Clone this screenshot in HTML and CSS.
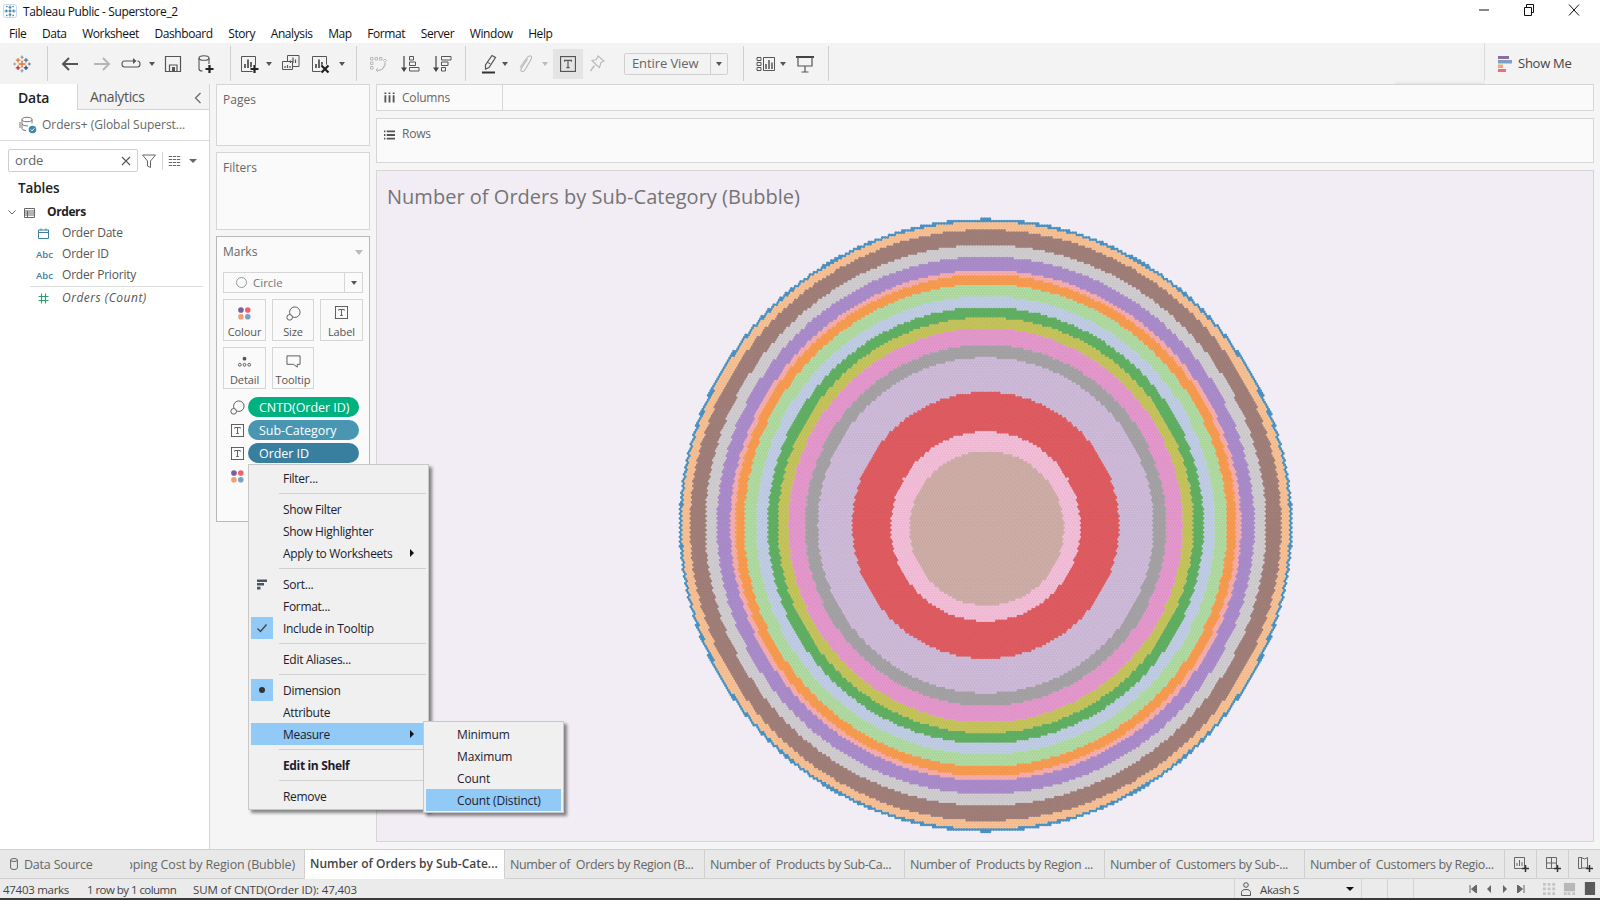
FILE: index.html
```html
<!DOCTYPE html>
<html lang="en">
<head>
<meta charset="utf-8">
<title>Tableau Public - Superstore_2</title>
<link rel="stylesheet" href="styles.css">
</head>
<body>
<svg class="defs" width="0" height="0" aria-hidden="true">
  <symbol id="i-t" viewBox="0 0 14 14"><rect x=".5" y=".5" width="13" height="13" fill="none" stroke="#555"/><path d="M4 5V3.800h6V5M7 3.800v6.400M5.600 10.200h2.800" fill="none" stroke="#555"/></symbol>
  <symbol id="i-dots" viewBox="0 0 16 16"><circle cx="4.200" cy="4.200" r="3" fill="#7b5f96"/><circle cx="11.500" cy="4.200" r="3" fill="#f0616f"/><circle cx="4.200" cy="11.500" r="3" fill="#f0a070"/><circle cx="11.500" cy="11.500" r="3" fill="#7f9fc8"/></symbol>
  <symbol id="i-size" viewBox="0 0 16 16"><circle cx="9.400" cy="6.600" r="5.600" fill="#fafafa" stroke="#555"/><circle cx="3.900" cy="12.100" r="3" fill="#fafafa" stroke="#555"/></symbol>
</svg>
<div class="app">
  <header class="titlebar">
    <svg class="app-icon" viewBox="0 0 14 14"><rect x=".5" y=".5" width="13" height="13" rx="2" fill="#fff" stroke="#c8d8e4"/><g stroke="#2a7cae" stroke-width="1"><path d="M7 1.500v3.500M5.500 3.200h3M7 9v3.500M5.500 10.800h3M1.500 7h3.500M3.200 5.500v3M9 7h3.500M10.800 5.500v3"/><path d="M7 5.500v3M5.500 7h3" stroke="#1b5e8c"/><path d="M3 2.500h1.500M3.800 1.800v1.500M9.500 2.500H11M10.200 1.800v1.500M3 11.500h1.500M3.800 10.800v1.500M9.500 11.500H11M10.200 10.800v1.500" stroke-width=".8"/></g></svg>
    <span class="app-title">Tableau Public - Superstore_2</span>
    <div class="winbtns">
      <svg viewBox="0 0 12 12"><path d="M1 6h10" stroke="#111"/></svg>
      <svg viewBox="0 0 12 12"><path d="M1.500 3.500h7v8h-7zM3.500 3.500V.5h7v8h-2" fill="none" stroke="#111"/></svg>
      <svg viewBox="0 0 12 12"><path d="M1 .5l10 11M11 .5l-10 11" stroke="#111"/></svg>
    </div>
  </header>
  <nav class="menubar">
    <span>File</span><span>Data</span><span>Worksheet</span><span>Dashboard</span><span>Story</span><span>Analysis</span><span>Map</span><span>Format</span><span>Server</span><span>Window</span><span>Help</span>
  </nav>
  <div class="toolbar">
    <div class="tool w44"><svg class="logo" viewBox="0 0 18 18"><g fill="none"><path d="M9 .5v3.500M7.500 2.200h3" stroke="#6f97a8" stroke-width="1"/><path d="M5 3v4.500M2.800 5.200h4.400" stroke="#e8762c" stroke-width="1.200"/><path d="M13 3v4.500M10.800 5.200h4.400" stroke="#5b6f8a" stroke-width="1.200"/><path d="M9 5.500v7M5.500 9h7" stroke="#e8762c" stroke-width="1.500"/><path d="M1.700 7.500v3M.2 9h3" stroke="#8aa0ac" stroke-width="1"/><path d="M16.300 7.500v3M14.800 9h3" stroke="#5b7f9a" stroke-width="1"/><path d="M5 10.500V15M2.800 12.800h4.400" stroke="#c72035" stroke-width="1.200"/><path d="M13 10.500V15M10.800 12.800h4.400" stroke="#1f447e" stroke-width="1.200"/><path d="M9 14v3.500M7.500 15.800h3" stroke="#6f97a8" stroke-width="1"/></g></svg></div>
    <i class="sep sep6"></i>
    <div class="tool w40"><svg class="ic" viewBox="0 0 20 20"><path d="M18 10H3M9 4l-6 6 6 6" fill="none" stroke="#555" stroke-width="2"/></svg></div>
    <div class="tool w24"><svg class="ic" viewBox="0 0 20 20"><path d="M2 10h15M11 4l6 6-6 6" fill="none" stroke="#b5b5b5" stroke-width="2"/></svg></div>
    <div class="tool w34"><svg class="ic ic-wide" viewBox="0 0 20 12"><path d="M12.500 3H3.500Q1 3 1 6t2.500 3h13q2.500 0 2.500-3t-2.500-3" fill="none" stroke="#555" stroke-width="1.100"/><path d="M12 0l3.500 3L12 6z" fill="#555"/></svg></div>
    <div class="tool w8"><i class="dd"></i></div>
    <div class="tool w34"><svg class="ic" viewBox="0 0 20 20"><path d="M2.500 2.500h15v15h-15z" fill="none" stroke="#555" stroke-width="1.200"/><path d="M6.500 17v-6h7.500v6" fill="none" stroke="#555" stroke-width="1.200"/><path d="M9 13h3v4H9z" fill="#555"/></svg></div>
    <div class="tool w30"><svg class="ic" viewBox="0 0 20 20"><ellipse cx="9" cy="4" rx="5" ry="2.300" fill="none" stroke="#555" stroke-width="1.100"/><path d="M4 4v11q0 2 3.500 2M14 4v6" fill="none" stroke="#555" stroke-width="1.100"/><path d="M14.500 11v8M10.500 15h8" stroke="#222" stroke-width="2.200"/></svg></div>
    <i class="sep"></i>
    <div class="tool w18"><svg class="ic" viewBox="0 0 20 20"><path d="M2.500 2.500h14v15h-14z" fill="none" stroke="#555"/><path d="M6 14v-4M9 14V5.500M12 14V8" stroke="#555" stroke-width="1.800"/><path d="M15.500 11v8M11.500 15h8" fill="none" stroke="#f3f3f3" stroke-width="4"/><path d="M15.500 11v8M11.500 15h8" stroke="#222" stroke-width="2.200"/></svg></div>
    <div class="tool w22"><i class="dd"></i></div>
    <div class="tool w22"><svg class="ic" viewBox="0 0 20 20"><path d="M6.500 1.500h11.500v11H6.500z" fill="#f3f3f3" stroke="#555"/><path d="M1.500 7.500h10v8h-10z" fill="#f3f3f3" stroke="#555"/><path d="M9.500 9V6.500M12 9V3.500M14.500 9V5.500M4 14v-2M6.500 14v-3M9 14v-2" stroke="#555" stroke-width="1.200"/></svg></div>
    <div class="tool w36"><svg class="ic" viewBox="0 0 20 20"><path d="M2.500 2.500h14v15h-14z" fill="none" stroke="#555"/><path d="M6 14v-4M9 14V5.500M12 14V8" stroke="#555" stroke-width="1.800"/><path d="M11.500 11.500l7 7M18.500 11.500l-7 7" stroke="#f3f3f3" stroke-width="4"/><path d="M11.500 11.500l7 7M18.500 11.500l-7 7" stroke="#222" stroke-width="2.200"/></svg></div>
    <div class="tool w8"><i class="dd"></i></div>
    <i class="sep"></i>
    <div class="tool w24"><svg class="ic" viewBox="0 0 20 20"><path d="M2.500 3.500h2.500v2.500H2.500zM7 3.500h2.500v2.500H7zM11.500 3.500H14v2.500h-2.500zM2.500 8h2.500v2.500H2.500zM2.500 12.500h2.500V15H2.500z" fill="none" stroke="#bbb"/><path d="M17 7q1 5-3.500 8.500M8 16q3 1 5.500-.5" fill="none" stroke="#bbb" stroke-width="1.200"/><path d="M15 7l2-2 2 2M10 14l-2 2 2 2" fill="none" stroke="#bbb"/></svg></div>
    <div class="tool w40"><svg class="ic" viewBox="0 0 20 20"><path d="M4 2v13" stroke="#444" stroke-width="1.200"/><path d="M1 13.500h6L4 18z" fill="#444"/><path d="M9.500 2.500h4v3.500h-4zM9.500 8h6v3.500h-6zM9.500 13.500h9.500V17H9.500z" fill="none" stroke="#555"/></svg></div>
    <div class="tool w24"><svg class="ic" viewBox="0 0 20 20"><path d="M4 2v13" stroke="#444" stroke-width="1.200"/><path d="M1 13.500h6L4 18z" fill="#444"/><path d="M9.500 2.500h9.500V6H9.500zM9.500 8h6.500v3.500H9.500zM9.500 13.500h4V17h-4z" fill="none" stroke="#555"/></svg></div>
    <i class="sep sep22"></i>
    <div class="tool w26"><svg class="ic" viewBox="0 0 20 20"><path d="M13 1.500l3.500 2-6.500 10-3.500 1.500 0-4z" fill="none" stroke="#555" stroke-width="1.200"/><path d="M8 8l3.500 2" stroke="#555"/><path d="M3 18.500h13" stroke="#333" stroke-width="2"/></svg></div>
    <div class="tool w6"><i class="dd"></i></div>
    <div class="tool w34"><svg class="ic" viewBox="0 0 20 20"><path d="M12.500 5l-6 9q-1.500 3 .5 3.500t3.500-2.500L16 5.500q1.500-3-.5-3.500t-4 2.500L5 13.500" fill="none" stroke="#bbb" stroke-width="1.200"/></svg></div>
    <div class="tool w6"><i class="dd dd-light"></i></div>
    <div class="tool tbtn"><svg class="ic-t" viewBox="0 0 14 14"><use href="#i-t"/></svg></div>
    <div class="tool w28"><svg class="ic" viewBox="0 0 20 20"><path d="M11 2l6 5-3 1.500-1.500 5-2-1.500-3.500-3.500-2-2 4.500-1z" fill="none" stroke="#bbb" stroke-width="1.100"/><path d="M7.500 11.500L3.500 17" stroke="#bbb" stroke-width="1.300"/></svg></div>
    <div class="fitbox"><span class="fit-label">Entire View</span><span class="fit-arrow"><i class="dd"></i></span></div>
    <i class="sep sep30"></i>
    <div class="tool w16"><svg class="ic" viewBox="0 0 20 20"><path d="M1 3.500h4v3H1zM1 8.500h4v3H1zM1 13.500h4v3H1z" fill="none" stroke="#555"/><path d="M7.500 3.500h11v13h-11z" fill="none" stroke="#555"/><path d="M10 15v-5M13 15V6M16 15V8.500" stroke="#555" stroke-width="1.500"/></svg></div>
    <div class="tool w18"><i class="dd"></i></div>
    <div class="tool w26"><svg class="ic" viewBox="0 0 20 20"><path d="M1 3h18" stroke="#444" stroke-width="2"/><path d="M3 3v9h14V3M10 12v6M6.500 18h7" fill="none" stroke="#555" stroke-width="1.200"/></svg></div>
    <i class="sep"></i>
    <div class="showme">
      <svg class="sm-ic" viewBox="0 0 14 16"><path d="M0 0h11v3H0z" fill="#8a6f9e"/><path d="M0 4h14v3.500H0z" fill="#7f9fc8"/><path d="M0 8.500h5V12H0z" fill="#f0a878"/><path d="M0 13h8v3H0z" fill="#f4687a"/></svg>
      <span>Show Me</span>
    </div>
  </div>

  <main class="workspace">
    <aside class="datapane">
      <div class="dtabs">
        <div class="dtab-on">Data</div>
        <div class="dtab-off"><span>Analytics</span><svg class="chev" viewBox="0 0 8 12"><path d="M6.500 1L1.500 6l5 5" fill="none" stroke="#666" stroke-width="1.200"/></svg></div>
      </div>
      <div class="dsource">
        <svg class="ds-ic" viewBox="0 0 18 18"><ellipse cx="8" cy="3.500" rx="5" ry="2.200" fill="none" stroke="#777"/><path d="M3 3.500v9q0 2 4 2M13 3.500v4M3 8q1 2 6 2M1 6v6" fill="none" stroke="#777"/><circle cx="13.500" cy="13.500" r="3.800" fill="#3f88ab"/><path d="M11.800 13.500l1.300 1.300 2.200-2.400" fill="none" stroke="#fff"/></svg>
        <span>Orders+ (Global Superst...</span>
      </div>
      <div class="searchrow">
        <div class="searchbox"><span>orde</span><svg class="x" viewBox="0 0 10 10"><path d="M1 1l8 8M9 1L1 9" stroke="#555" stroke-width="1.100"/></svg></div>
        <svg class="funnel" viewBox="0 0 14 14"><path d="M.5 1h13L8.500 7v6.500L5.500 12V7z" fill="none" stroke="#666"/></svg>
        <i class="vline"></i>
        <svg class="gridic" viewBox="0 0 13 10"><path d="M0 .5h13M0 3.500h13M0 6.500h13M0 9.500h13" stroke="#666"/><path d="M.5 0v10M4.500 0v10M8.500 0v10M12.500 0v10" stroke="#f9f9f9" stroke-width=".8"/></svg>
        <i class="dd dd-left"></i>
      </div>
      <div class="tables-h">Tables</div>
      <div class="tree-root">
        <svg class="tchev" viewBox="0 0 8 5"><path d="M.5.500L4 4 7.500.500" fill="none" stroke="#666"/></svg>
        <svg class="ticon" viewBox="0 0 11 10"><path d="M.5.500h10v9H.500zM.5 3h10M.5 5h10M.5 7h10M3.500 3v6.500" fill="none" stroke="#666"/></svg>
        <span>Orders</span>
      </div>
      <div class="field"><span class="ftype"><svg class="cal" viewBox="0 0 11 11"><path d="M.5 2h10v8.500H.5zM.5 4.500h10M3 .5v2M8 .5v2" fill="none" stroke="#3f7f9f"/></svg></span><span>Order Date</span></div>
      <div class="field"><span class="ftype abc">Abc</span><span>Order ID</span></div>
      <div class="field"><span class="ftype abc">Abc</span><span>Order Priority</span></div>
      <div class="fsep"></div>
      <div class="field field-m"><span class="ftype"><svg class="cal" viewBox="0 0 11 11"><path d="M3.500.5v10M7.500.5v10M.5 3.500h10M.5 7.500h10" stroke="#2f9e6f" stroke-width="1.100"/></svg></span><em>Orders (Count)</em></div>
    </aside>

    <section class="cardcol">
      <div class="card card-pages"><div class="card-label">Pages</div></div>
      <div class="card card-filters"><div class="card-label">Filters</div></div>
      <div class="card card-marks">
        <div class="marks-head"><span>Marks</span><i class="dd dd-grey"></i></div>
        <div class="marktype"><span class="ring"></span><span class="mt-label">Circle</span><span class="mt-arrow"><i class="dd"></i></span></div>
        <div class="markgrid">
          <div class="markbtn"><svg class="mb-ic" viewBox="0 0 16 16"><use href="#i-dots"/></svg><span>Colour</span></div>
          <div class="markbtn"><svg class="mb-ic" viewBox="0 0 16 16"><use href="#i-size"/></svg><span>Size</span></div>
          <div class="markbtn"><svg class="mb-ic mb-t" viewBox="0 0 14 14"><use href="#i-t"/></svg><span>Label</span></div>
          <div class="markbtn"><svg class="mb-ic" viewBox="0 0 16 16"><circle cx="8" cy="5" r="2" fill="#555"/><circle cx="3" cy="11.500" r="1.500" fill="none" stroke="#555"/><circle cx="8" cy="11.500" r="1.500" fill="none" stroke="#555"/><circle cx="13" cy="11.500" r="1.500" fill="none" stroke="#555"/></svg><span>Detail</span></div>
          <div class="markbtn"><svg class="mb-ic" viewBox="0 0 16 16"><path d="M1 2h14v9h-3v3l-4-3H1z" fill="none" stroke="#555"/></svg><span>Tooltip</span></div>
        </div>
        <div class="pillrow"><svg class="pill-ic" viewBox="0 0 16 16"><use href="#i-size"/></svg><span class="pill pill-green">CNTD(Order ID)</span></div>
        <div class="pillrow"><svg class="pill-ic pill-t" viewBox="0 0 14 14"><use href="#i-t"/></svg><span class="pill pill-blue">Sub-Category</span></div>
        <div class="pillrow"><svg class="pill-ic pill-t" viewBox="0 0 14 14"><use href="#i-t"/></svg><span class="pill pill-navy">Order ID</span></div>
        <div class="pillrow"><svg class="pill-ic" viewBox="0 0 16 16"><use href="#i-dots"/></svg></div>
      </div>
    </section>

    <section class="viewcol">
      <div class="shelf shelf-cols">
        <div class="shelf-name"><svg class="shelf-ic" viewBox="0 0 12 12"><path d="M1.500 3v8M6 3v8M10.500 3v8" stroke="#555" stroke-width="2"/><path d="M1.500 0v1.500M6 0v1.500M10.500 0v1.500" stroke="#555" stroke-width="2"/></svg><span>Columns</span></div>
      </div>
      <div class="shelf shelf-rows">
        <div class="shelf-name"><svg class="shelf-ic" viewBox="0 0 12 12"><path d="M3 2h9M3 6h9M3 10h9" stroke="#555" stroke-width="2"/><path d="M0 2h1.500M0 6h1.500M0 10h1.500" stroke="#555" stroke-width="2"/></svg><span>Rows</span></div>
      </div>
      <div class="viz">
        <h1 class="viz-title">Number of Orders by Sub-Category (Bubble)</h1>
        <canvas id="bubble" class="bubble" width="620" height="620"></canvas>
      </div>
    </section>
  </main>

  <footer class="tabbar">
    <div class="tab tab-src"><svg class="tab-db" viewBox="0 0 8 12"><ellipse cx="4" cy="2" rx="3.400" ry="1.500" fill="none" stroke="#666"/><path d="M.6 2v8q0 1.500 3.400 1.500T7.400 10V2" fill="none" stroke="#666"/></svg><span>Data Source</span></div>
    <div class="tab tab-clip"><span>Shipping Cost by Region (Bubble)</span></div>
    <div class="tab tab-on">Number of Orders by Sub-Cate...</div>
    <div class="tab">Number of&nbsp; Orders by Region (B...</div>
    <div class="tab">Number of&nbsp; Products by Sub-Ca...</div>
    <div class="tab">Number of&nbsp; Products by Region ...</div>
    <div class="tab">Number of&nbsp; Customers by Sub-...</div>
    <div class="tab">Number of&nbsp; Customers by Regio...</div>
    <div class="tabadd"><svg class="add-ic" viewBox="0 0 16 16"><path d="M1.500 1.500h10v11h-10z" fill="none" stroke="#666"/><path d="M4 10V7M6.500 10V4M9 10V6" stroke="#666"/><path d="M12.500 9v7M9 12.500h7" stroke="#333" stroke-width="1.500"/></svg></div>
    <div class="tabadd"><svg class="add-ic" viewBox="0 0 16 16"><path d="M1.500 1.500h10v11h-10zM1.500 7h10M6.500 1.500v11" fill="none" stroke="#666"/><path d="M12.500 9v7M9 12.500h7" stroke="#333" stroke-width="1.500"/></svg></div>
    <div class="tabadd"><svg class="add-ic" viewBox="0 0 16 16"><path d="M1.500 1.500h3v11h-3zM4.500 1.500l3 1.500 3-1.500V12h-6" fill="none" stroke="#666"/><path d="M12.500 9v7M9 12.500h7" stroke="#333" stroke-width="1.500"/></svg></div>
  </footer>
  <div class="statusbar">
    <span class="st st-marks">47403 marks</span>
    <span class="st st-rows">1 row by 1 column</span>
    <span class="st st-sum">SUM of CNTD(Order ID): 47,403</span>
    <div class="st-user">
      <svg class="user-ic" viewBox="0 0 10 14"><circle cx="5" cy="3" r="2.300" fill="none" stroke="#555"/><path d="M.5 13.500v-3q0-3 4.500-3t4.500 3v3z" fill="none" stroke="#555"/></svg>
      <span class="st-name">Akash S</span>
      <i class="dd dd-black"></i>
    </div>
    <i class="st-cell"></i><i class="st-cell"></i>
    <div class="st-nav">
      <svg viewBox="0 0 8 8"><path d="M1 0v8M7.500 0L2.500 4l5 4z" stroke="#666" fill="#666"/></svg>
      <svg viewBox="0 0 8 8"><path d="M6 0L2 4l4 4z" fill="#666"/></svg>
      <svg viewBox="0 0 8 8"><path d="M2 0l4 4-4 4z" fill="#666"/></svg>
      <svg viewBox="0 0 8 8"><path d="M7 0v8M.5 0l5 4-5 4z" stroke="#666" fill="#666"/></svg>
    </div>
    <div class="st-views">
      <svg viewBox="0 0 14 14"><path d="M0 1h3v3H0zM5 1h3v3H5zM10 1h3v3h-3zM0 6h3v3H0zM5 6h3v3H5zM10 6h3v3h-3zM0 11h3v3H0zM5 11h3v3H5zM10 11h3v3h-3z" fill="#c4c4c4"/></svg>
      <svg viewBox="0 0 14 14"><path d="M1 1h12v9H1z" fill="#b8b8b8"/><path d="M1 11h3v3H1zM5 11h3v3H5zM10 11h3v3h-3z" fill="#c4c4c4"/></svg>
      <svg viewBox="0 0 14 14"><path d="M2 0h11v14H2z" fill="#5a5a5a"/></svg>
    </div>
  </div>
  <div class="strip"></div>

  <div class="menu ctx">
    <div class="mi"><span>Filter...</span></div>
    <div class="msep"></div>
    <div class="mi"><span>Show Filter</span></div>
    <div class="mi"><span>Show Highlighter</span></div>
    <div class="mi"><span>Apply to Worksheets</span><i class="arrow"></i></div>
    <div class="msep"></div>
    <div class="mi"><span class="mark-ic"><svg class="sort-ic" viewBox="0 0 12 10"><path d="M1 0h10v2.400H1zM1 3.600h7V6H1zM1 7.200h3.500V10H1z" fill="#4a5568"/></svg></span><span>Sort...</span></div>
    <div class="mi"><span>Format...</span></div>
    <div class="mi"><span class="mark-ic mark-on"><svg class="check-ic" viewBox="0 0 12 10"><path d="M1.500 5.500l3 3L10.500 1.500" fill="none" stroke="#444" stroke-width="1.400"/></svg></span><span>Include in Tooltip</span></div>
    <div class="msep"></div>
    <div class="mi"><span>Edit Aliases...</span></div>
    <div class="msep"></div>
    <div class="mi"><span class="mark-ic mark-on"><i class="bullet"></i></span><span>Dimension</span></div>
    <div class="mi"><span>Attribute</span></div>
    <div class="mi mi-hot"><span>Measure</span><i class="arrow"></i></div>
    <div class="msep"></div>
    <div class="mi mi-bold"><span>Edit in Shelf</span></div>
    <div class="msep"></div>
    <div class="mi"><span>Remove</span></div>
  </div>
  <div class="menu sub">
    <div class="si">Minimum</div>
    <div class="si">Maximum</div>
    <div class="si">Count</div>
    <div class="si si-hot">Count (Distinct)</div>
  </div>
</div>
<script src="chart.js"></script>
</body>
</html>
```

FILE: styles.css
```css
* { box-sizing: border-box; }
html, body { margin: 0; height: 100%; }
body { font: 12px/1.2 "Open Sans", "Noto Sans", sans-serif; color: #333; background: #f5f5f5; overflow: hidden; }
i { display: block; font-style: normal; }
svg { display: block; flex: none; }
.defs { position: absolute; }

.app { position: relative; width: 1600px; height: 900px; display: flex; flex-direction: column; overflow: hidden; }

.titlebar { height: 22px; background: #fff; display: flex; align-items: center; padding-left: 3px; color: #111; flex: none; }
.app-icon { width: 14px; height: 14px; margin-top: 0; }
.app-title { margin-left: 6px; letter-spacing: -.36px; margin-top: 3px; }
.winbtns { margin-left: auto; display: flex; gap: 33px; margin-right: 20px; }
.winbtns svg { width: 12px; height: 12px; margin-top: -2px; }

.menubar { height: 21px; background: #fff; display: flex; align-items: center; padding: 4px 0 0 9px; color: #111; gap: 15.500px; flex: none; }
.menubar span { letter-spacing: -.4px; }

.toolbar { height: 41px; background: #f3f3f3; display: flex; align-items: center; flex: none; position: relative; }
.tool { height: 100%; display: flex; align-items: center; justify-content: center; flex: none; }
.ic { width: 20px; height: 20px; }
.ic-wide { height: 12px; }
.logo { width: 18px; height: 18px; }
.w6 { width: 6px; } .w8 { width: 8px; } .w16 { width: 16px; } .w18 { width: 18px; } .w22 { width: 22px; } .w24 { width: 24px; }
.w26 { width: 26px; } .w28 { width: 28px; } .w30 { width: 30px; } .w34 { width: 34px; } .w36 { width: 36px; } .w40 { width: 40px; } .w44 { width: 44px; }
.sep { width: 20px; height: 35px; flex: none; background: linear-gradient(#d0d0d0, #d0d0d0) center / 1px 100% no-repeat; }
.sep6 { width: 6px; }
.sep22 { width: 22px; }
.sep30 { width: 30px; }
.dd { width: 0; height: 0; border-left: 3.500px solid transparent; border-right: 3.500px solid transparent; border-top: 4px solid #555; flex: none; }
.dd-light { border-top-color: #bbb; }
.dd-left { margin-left: 8px; border-top-color: #666; border-left-width: 4px; border-right-width: 4px; }
.dd-grey { margin-left: auto; border-top-color: #bbb; border-left-width: 4.500px; border-right-width: 4.500px; border-top-width: 5px; }
.dd-black { margin-left: auto; border-top-color: #111; border-left-width: 4px; border-right-width: 4px; }
.tbtn { width: 30px; height: 30px; margin-left: 5px; background: #e4e4e4; }
.ic-t { width: 16px; height: 16px; }
.fitbox { width: 104px; height: 22px; margin-left: 13px; border: 1px solid #d0d0d0; border-radius: 2px; display: flex; align-items: center; flex: none; color: #666; font-size: 13px; }
.fit-label { padding-left: 7px; width: 85px; letter-spacing: -.1px; }
.fit-arrow { flex: 1; height: 100%; border-left: 1px solid #d0d0d0; display: flex; align-items: center; justify-content: center; }
.showme { position: relative; margin-left: auto; width: 116px; height: 100%; border-left: 1px solid #dcdcdc; display: flex; align-items: center; padding-left: 13px; gap: 6px; color: #444; font-size: 13px; letter-spacing: -.25px; flex: none; }
.showme::before { content: ""; position: absolute; right: 100%; bottom: 0; width: 90px; height: 3px; background: linear-gradient(#f3f3f3, #e4e4e4); }
.sm-ic { width: 14px; height: 16px; }

.workspace { height: 765px; display: flex; flex: none; background: #f5f5f5; }

.datapane { width: 210px; flex: none; background: #fff; border-right: 1px solid #d4d4d4; color: #555; }
.dtabs { height: 26px; display: flex; }
.dtab-on { width: 77px; display: flex; align-items: center; padding: 2px 0 0 18px; font-size: 14px; font-weight: 600; color: #222; letter-spacing: -.2px; }
.dtab-off { flex: 1; display: flex; align-items: center; justify-content: space-between; background: #f3f3f3; border-left: 1px solid #d4d4d4; border-bottom: 1px solid #d4d4d4; padding: 2px 7px 0 12px; font-size: 14px; color: #555; letter-spacing: -.35px; }
.chev { width: 8px; height: 12px; }
.dsource { height: 31px; display: flex; align-items: center; padding-left: 19px; gap: 5px; border-bottom: 1px solid #dcdcdc; letter-spacing: -.03px; color: #666; }
.ds-ic { width: 18px; height: 18px; }
.searchrow { display: flex; align-items: center; padding: 8px 0 0 8px; }
.searchbox { width: 130px; height: 23px; border: 1px solid #cfcfcf; border-radius: 2px; display: flex; align-items: center; justify-content: space-between; padding: 0 6px; font-size: 13px; color: #666; background: #fff; }
.x { width: 10px; height: 10px; }
.funnel { width: 14px; height: 14px; margin-left: 4px; }
.vline { width: 1px; height: 18px; background: #d4d4d4; margin-left: 6px; }
.gridic { width: 13px; height: 10px; margin-left: 5px; }
.tables-h { height: 20px; margin-top: 6px; padding-left: 18px; font-size: 13.500px; font-weight: 600; color: #222; display: flex; align-items: center; letter-spacing: -.1px; }
.tree-root { height: 21px; margin-top: 4px; display: flex; align-items: center; padding-left: 8px; font-weight: 700; color: #222; }
.tchev { width: 8px; height: 5px; }
.ticon { width: 11px; height: 10px; margin-left: 8px; }
.tree-root span { margin-left: 12px; letter-spacing: -.4px; }
.field { height: 21px; display: flex; align-items: center; letter-spacing: -.2px; }
.field em { letter-spacing: .5px; }
.ftype { width: 62px; padding-right: 10px; display: flex; justify-content: flex-end; }
.abc { font-size: 9.500px; color: #3f7f9f; font-weight: 600; letter-spacing: 0; padding-right: 9px; }
.cal { width: 11px; height: 11px; margin-right: 3px; }
.fsep { height: 1px; margin: 0 6px 0 30px; background: #dcdcdc; }
.field-m { height: 22px; }

.cardcol { width: 166px; flex: none; padding: 0 6px; display: flex; flex-direction: column; gap: 6px; }
.card { background: #fafafa; border: 1px solid #d6d6d6; flex: none; }
.card-label { padding: 8px 0 0 6px; color: #666; }
.card-pages { height: 62px; }
.card-filters { height: 78px; }
.card-marks { height: 286px; border-color: #b8b8b8; padding: 0 6px; }
.marks-head { height: 35px; display: flex; align-items: center; color: #666; padding-bottom: 4px; }
.marktype { height: 21px; border: 1px solid #d6d6d6; display: flex; align-items: center; color: #777; background: #fafafa; }
.ring { width: 11px; height: 11px; border: 1.500px solid #999; border-radius: 50%; margin-left: 12px; }
.mt-label { margin-left: 6px; flex: 1; font-size: 11.500px; }
.mt-arrow { width: 18px; height: 100%; border-left: 1px solid #d6d6d6; display: flex; align-items: center; justify-content: center; }
.markgrid { display: grid; grid-template-columns: 43px 42px 43px; gap: 6px; margin-top: 6px; }
.markbtn { height: 42px; border: 1px solid #d6d6d6; display: flex; flex-direction: column; align-items: center; padding-top: 6px; font-size: 11px; color: #555; }
.markbtn span { margin-top: 4px; letter-spacing: -.1px; }
.mb-ic { width: 15px; height: 15px; }
.mb-t { width: 13px; height: 13px; margin-bottom: 2px; }
.pillrow { height: 20px; margin-top: 3px; display: flex; align-items: center; }
.markgrid + .pillrow { margin-top: 8px; }
.pill-ic { width: 15px; height: 15px; margin-left: 7px; }
.pill-t { width: 13px; height: 13px; margin-left: 8px; margin-right: 1px; }
.pill { width: 111px; height: 20px; border-radius: 10px; margin-left: 3px; color: #fff; padding-left: 11px; display: flex; align-items: center; font-size: 12.500px; letter-spacing: -.05px; }
.pill-green { background: #00b180; }
.pill-blue { background: #4996b2; }
.pill-navy { background: #387e9f; }

.viewcol { flex: 1; min-width: 0; padding-right: 6px; display: flex; flex-direction: column; gap: 7px; }
.shelf { background: #fafafa; border: 1px solid #d6d6d6; flex: none; }
.shelf-cols { height: 27px; }
.shelf-rows { height: 45px; }
.shelf-name { width: 126px; height: 26px; display: flex; align-items: center; padding-left: 7px; gap: 7px; color: #666; letter-spacing: -.2px; }
.shelf-cols .shelf-name { height: 25px; border-right: 1px solid #d6d6d6; }
.shelf-cols .shelf-name span { margin-top: 2px; }
.shelf-rows .shelf-name { height: 31px; }
.shelf-ic { width: 11px; height: 12px; }
.viz { height: 672px; background: #f2ecf4; border: 1px solid #d6d6d6; display: flex; flex-direction: column; align-items: center; flex: none; }
.viz-title { align-self: flex-start; height: 45px; margin: 0; padding: 11.500px 0 0 10px; font-size: 20px; font-weight: 400; color: #757575; line-height: 28px; letter-spacing: .02px; }
.bubble { display: block; width: 620px; height: 620px; }

.tabbar { height: 30px; flex: none; display: flex; background: #e8e8e8; border-top: 1px solid #d0d0d0; border-bottom: 1px solid #d0d0d0; color: #666; }
.tab { width: 200px; flex: none; display: flex; align-items: center; padding-left: 5px; border-right: 1px solid #d0d0d0; white-space: nowrap; overflow: hidden; letter-spacing: -.37px; font-size: 12.500px; }
.tab-src { width: 130px; padding-left: 10px; gap: 6px; border-right: 0; letter-spacing: -.2px; }
.tab-db { width: 8px; height: 12px; }
.tab-clip { width: 175px; justify-content: flex-end; padding: 0 9px 0 0; letter-spacing: -.15px; }
.tab-clip span { flex: none; }
.tab-on { background: #fff; color: #444; font-weight: 600; border-bottom: 1px solid #fff; margin-bottom: -1px; letter-spacing: 0; font-size: 12px; }
.tabadd { width: 32px; flex: none; display: flex; align-items: center; justify-content: center; border-right: 1px solid #d0d0d0; }
.tabadd:last-child { border-right: 0; }
.add-ic { width: 16px; height: 16px; }

.statusbar { height: 19px; flex: none; background: #ebebeb; display: flex; align-items: center; position: relative; color: #444; font-size: 11.500px; }
.st { flex: none; margin-top: 2px; }
.st-marks { margin-left: 3px; width: 84px; letter-spacing: -.28px; }
.st-rows { width: 106px; letter-spacing: -.55px; }
.st-sum { width: 1041px; letter-spacing: -.12px; }
.st-user { width: 127px; height: 100%; display: flex; align-items: center; gap: 9px; border-left: 1px solid #d4d4d4; padding: 0 7px 0 6px; }
.st-name { letter-spacing: -.35px; margin-top: 2px; }
.user-ic { width: 10px; height: 14px; }
.st-cell { width: 26px; height: 100%; border-left: 1px solid #d4d4d4; }
.st-nav { display: flex; gap: 8px; height: 100%; align-items: center; border-left: 1px solid #d4d4d4; padding-left: 55px; }
.st-nav svg { width: 8px; height: 8px; }
.st-views { display: flex; gap: 7px; padding-left: 18px; }
.st-views svg { width: 13px; height: 13px; }

.strip { height: 2px; background: #3a3a3a; flex: none; }

.menu { position: absolute; background: #f0f0f0; border: 1px solid #c8c8c8; box-shadow: 3px 3px 3px rgba(0,0,0,.45); color: #1c1c2c; padding: 2px; }
.ctx { left: 248px; top: 464px; width: 181px; height: 346px; }
.sub { left: 423px; top: 721px; width: 141px; height: 92px; padding: 1px 2px; }
.mi { position: relative; height: 22px; display: flex; align-items: center; padding: 2px 0 0 32px; letter-spacing: -.3px; }
.msep { height: 9px; background: linear-gradient(#d0d0d0, #d0d0d0) 0 4px / 100% 1px no-repeat; margin: 0 0 0 28px; }
.mi-hot { background: #91c9f7; }
.mi-bold { font-weight: 700; letter-spacing: -.35px; }
.mark-ic { position: absolute; left: 0; top: 0; width: 22px; height: 22px; display: flex; align-items: center; justify-content: center; }
.mark-on { background: #91c9f7; }
.sort-ic { width: 12px; height: 11px; margin-left: -1px; }
.check-ic { width: 12px; height: 10px; }
.bullet { width: 6px; height: 6px; border-radius: 50%; background: #333; }
.arrow { position: absolute; left: 159px; top: 7px; width: 0; height: 0; border-top: 4px solid transparent; border-bottom: 4px solid transparent; border-left: 4px solid #111; }
.si { height: 22px; display: flex; align-items: center; padding: 2px 0 0 31px; letter-spacing: -.15px; }
.si-hot { background: #91c9f7; }
```

FILE: chart.js
```js
(function () {
  var canvas = document.getElementById('bubble');
  var ctx = canvas.getContext('2d');
  var cx = 310.7, cy = 309.3;
  var rings = [
    [306.4, '#4a96c8'], [303.5, '#fdc596'], [295.5, '#a4827b'], [280, '#d4d2d4'],
    [268.5, '#ae8fcf'], [255, '#fcb0b0'], [250.5, '#fd9f50'], [241, '#b3e0a4'],
    [229, '#c3d2ea'], [218, '#62b464'], [207.5, '#c9c95c'], [197, '#e99bd0'],
    [180.5, '#a8a6a8'], [167.5, '#d2bfdd']
  ];
  var inner = [
    [77, 1, 3, '#d2b1aa'],
    [94.5, 0, 1, '#f8c2dc'],
    [133, 0, 0, '#e45e62']
  ];
  var step = 2.68, rowH = step * 0.866;
  var dotR = 1.6, ringR = 1.2;
  var groups = {};

  function colourAt(x, y) {
    for (var i = 0; i < inner.length; i++) {
      var c = inner[i];
      if (Math.hypot(x - cx - c[1], y - cy - c[2]) <= c[0]) return c[3];
    }
    var r = Math.hypot(x - cx, y - cy);
    if (r > rings[0][0]) return null;
    var colour = rings[0][1];
    for (var j = 0; j < rings.length; j++) {
      if (r <= rings[j][0]) colour = rings[j][1];
    }
    return colour;
  }

  var row = 0;
  for (var y = cy % rowH; y < 620; y += rowH, row++) {
    for (var x = (row % 2 ? step / 2 : 0) + cx % step; x < 620; x += step) {
      var colour = colourAt(x, y);
      if (colour) (groups[colour] = groups[colour] || []).push(x, y);
    }
  }

  Object.keys(groups).forEach(function (colour) {
    var pts = groups[colour];
    ctx.fillStyle = colour;
    ctx.beginPath();
    for (var i = 0; i < pts.length; i += 2) {
      ctx.moveTo(pts[i] + dotR, pts[i + 1]);
      ctx.arc(pts[i], pts[i + 1], dotR, 0, Math.PI * 2);
    }
    ctx.fill();
  });
  Object.keys(groups).forEach(function (colour) {
    var pts = groups[colour];
    ctx.strokeStyle = 'rgba(60,40,60,0.08)';
    ctx.lineWidth = 0.6;
    ctx.beginPath();
    for (var i = 0; i < pts.length; i += 2) {
      ctx.moveTo(pts[i] + ringR, pts[i + 1]);
      ctx.arc(pts[i], pts[i + 1], ringR, 0, Math.PI * 2);
    }
    ctx.stroke();
  });
})();
```
